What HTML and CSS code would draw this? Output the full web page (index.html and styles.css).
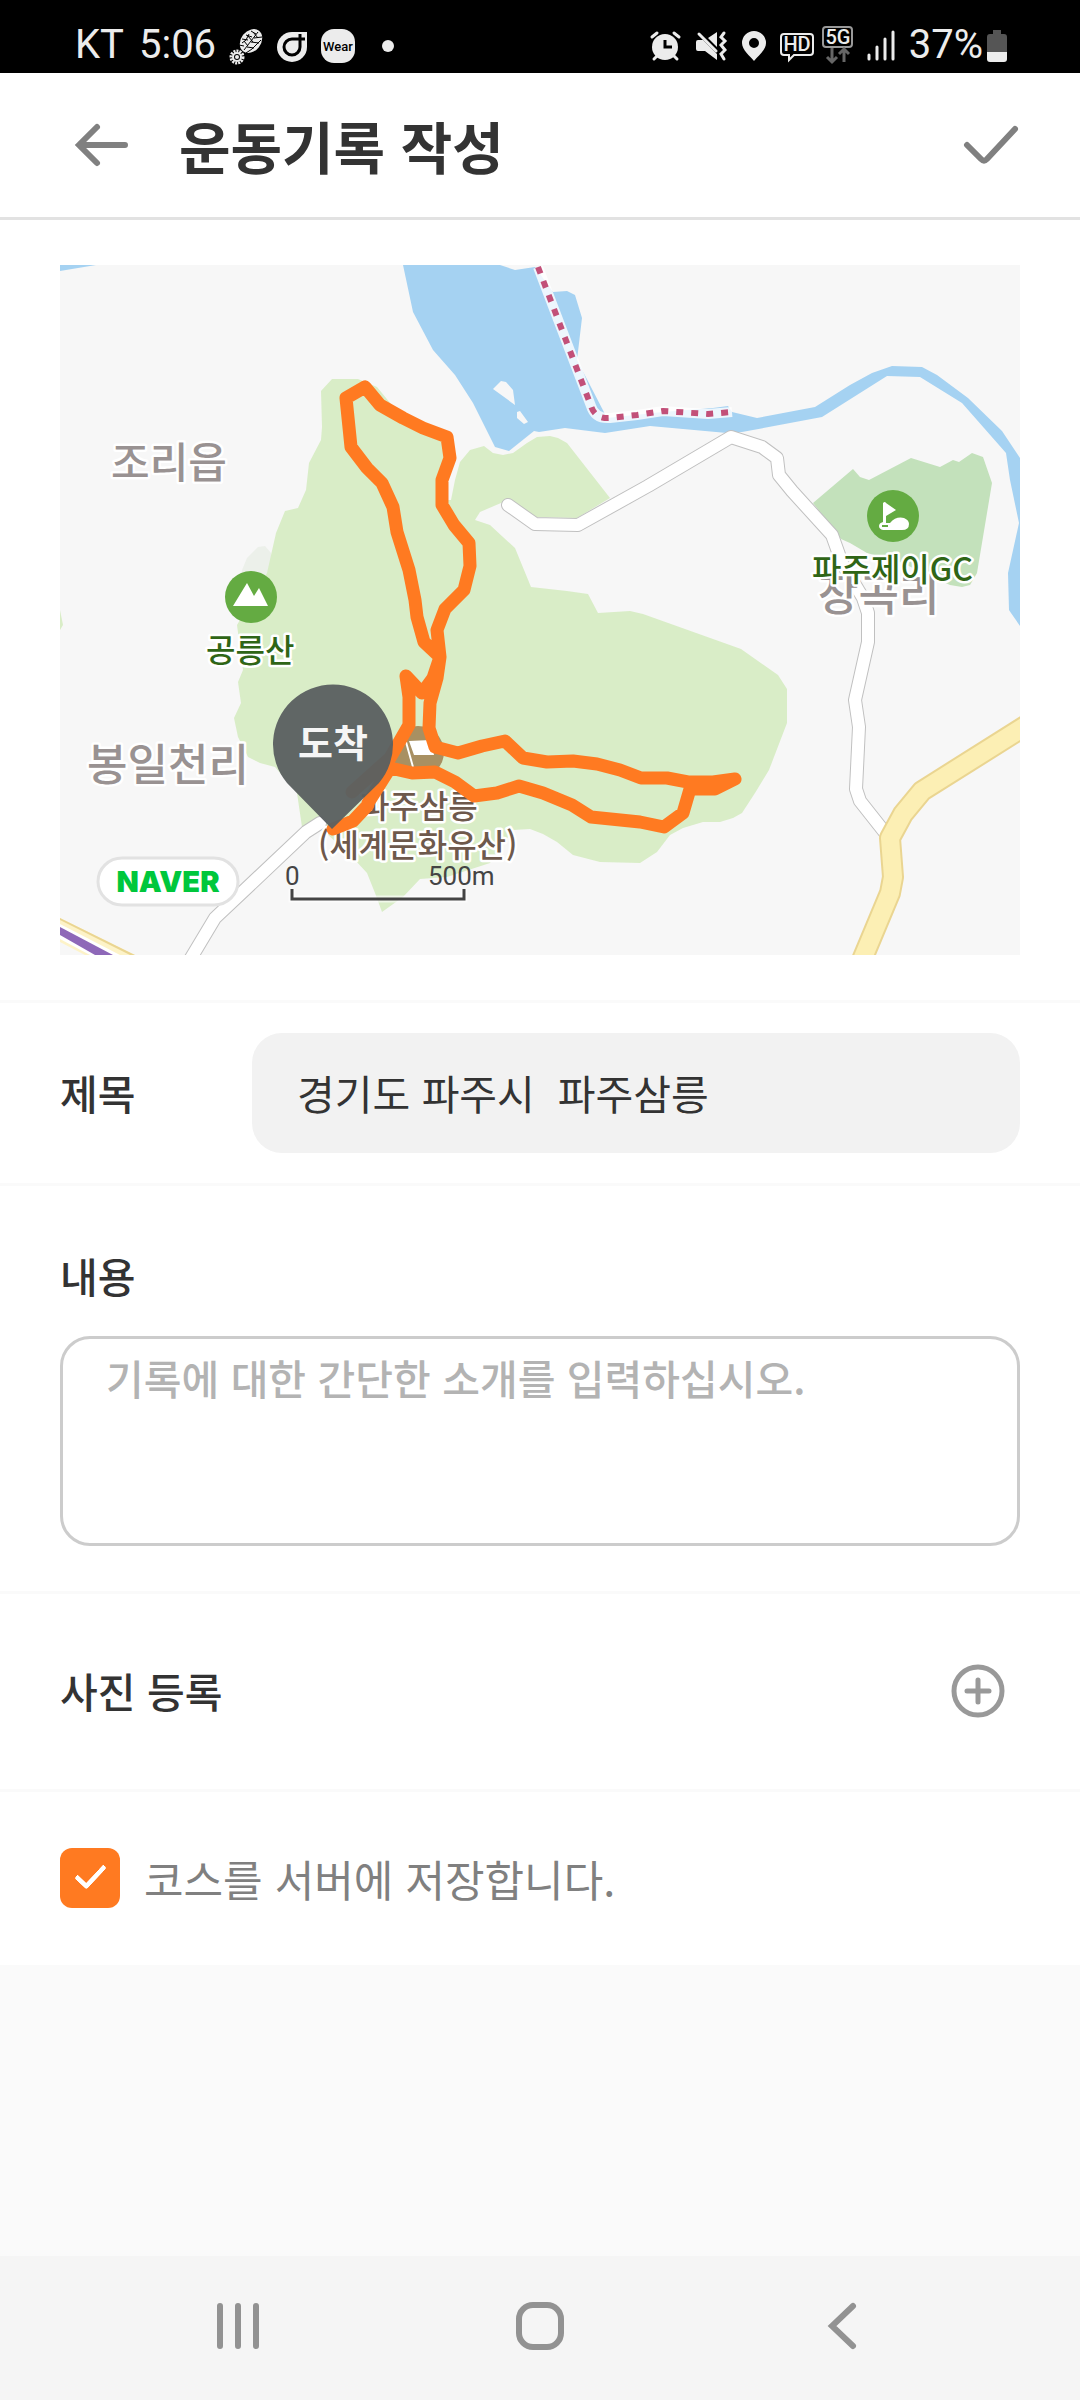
FILE: index.html
```html
<!DOCTYPE html>
<html lang="ko">
<head>
    <meta charset="UTF-8">
    <meta name="viewport" content="width=device-width, initial-scale=1.0">
    <title>운동기록 작성</title>
    <link rel="stylesheet" href="styles.css">
</head>
<body>
    <div class="status-bar">
        <div class="status-group">
            <span class="carrier">KT</span>
            <span class="clock">5:06</span>
            <svg class="status-icon" width="50" height="44" viewBox="0 0 50 44">
                <ellipse cx="29" cy="18" rx="10" ry="13" transform="rotate(38 29 18)"/>
                <g class="cut thin">
                    <path d="M22 27L36 9M20 20l4-3 3-6M24 30l6-4 9-9"/>
                    <path d="M17 22l5 1M20 16l6 1M24 12l6 2M29 8l5 3M25 24l7 1M29 19l8 1M32 15l8-1M22 18l4 5M26 13l5 6M31 9l5 6"/>
                </g>
                <circle class="gear" cx="15" cy="34" r="6"/>
                <circle class="gear-ring" cx="15" cy="34" r="4"/>
                <circle cx="15" cy="34" r="2"/>
            </svg>
            <svg class="status-icon" width="44" height="44" viewBox="0 0 44 44">
                <path d="M20 9h15v15a15 15 0 1 1-15-15z"/>
                <path class="cut" d="M28 11v13a8 8 0 1 1-8-8h13"/>
            </svg>
            <svg class="status-icon" width="44" height="44" viewBox="0 0 44 44">
                <rect x="5" y="6" width="34" height="34" rx="13"/>
                <text class="wear-text" x="22" y="28">Wear</text>
            </svg>
            <svg class="status-icon" width="44" height="44" viewBox="0 0 44 44">
                <circle cx="28" cy="23" r="6"/>
            </svg>
        </div>
        <div class="status-group">
            <svg class="status-icon" width="42" height="44" viewBox="0 0 42 44">
                <circle cx="19" cy="24" r="13"/>
                <path class="line" d="M6 14l5-4M28 10l5 4M11 33l-3 3M28 33l3 3"/>
                <path class="cut" d="M19 17v7h7"/>
            </svg>
            <svg class="status-icon" width="46" height="44" viewBox="0 0 46 44">
                <path d="M10 17h5l14 14v6L17 28h-7q-2 0-2-2v-7q0-2 2-2zM29 9v15l-9-9z"/>
                <path class="line" d="M11 11l17 17M36 10l-3 4 4 4-4 4 4 5-4 4 3 5"/>
                <path class="cut thin" d="M13 9l16 16"/>
            </svg>
            <svg class="status-icon" width="39" height="44" viewBox="0 0 39 44">
                <path fill-rule="evenodd" d="M20 8a12 12 0 0 1 12 12c0 7-8 13-12 18C16 33 8 27 8 20A12 12 0 0 1 20 8zm0 7a5 5 0 1 0 0 10 5 5 0 0 0 0-10z"/>
            </svg>
            <svg class="status-icon" width="45" height="44" viewBox="0 0 45 44">
                <path class="frame" d="M11 11h26q3 0 3 3v15q0 3-3 3H21l-5 5v-5h-5q-3 0-3-3V14q0-3 3-3z"/>
                <text class="badge-text" x="24" y="28">HD</text>
            </svg>
            <svg class="status-icon" width="40" height="44" viewBox="0 0 40 44">
                <rect class="frame dim" x="5" y="4" width="29" height="20" rx="3"/>
                <text class="badge-text" x="20" y="21">5G</text>
                <path class="frame arrows" d="M14 25v13M9 34l5 5 5-5M26 39V26M21 31l5-5 5 5"/>
            </svg>
            <svg class="status-icon" width="45" height="44" viewBox="0 0 45 44">
                <path class="line" d="M11 32v4M19 24v12M27 16v20M35 9v27"/>
            </svg>
            <span class="battery-text">37%</span>
            <svg class="status-icon" width="28" height="44" viewBox="0 0 28 44">
                <path class="battery-shell" d="M10 7h8v4h3q3 0 3 3v15H4V14q0-3 3-3h3z"/>
                <path d="M4 29h20v7q0 3-3 3H7q-3 0-3-3z"/>
            </svg>
        </div>
    </div>

    <header class="header">
        <button type="button" class="icon-button" aria-label="뒤로">
            <svg width="56" height="56" viewBox="0 0 56 56"><path d="M51 28H6M23 10L5 28l18 18"/></svg>
        </button>
        <h1 class="header-title">운동기록 작성</h1>
        <button type="submit" form="record-form" class="icon-button" aria-label="완료">
            <svg width="56" height="56" viewBox="0 0 56 56"><path d="M4 28l14 14q3 3 6 0L52 12"/></svg>
        </button>
    </header>

    <form class="record-form" id="record-form">
        <section class="section map-section">
            <svg class="map" viewBox="60 265 960 690" role="img" aria-label="코스 지도">
                <rect class="land" x="60" y="265" width="960" height="690"/>

                <!-- parks and forest -->
                <path class="patch" d="M242 570l5-12 11-11 7-1 6 7 4 20-20 60h-8l-10-17z"/>
                <path class="forest" d="M332 379L358 379 377 387 400 415 444 440 448 458 443 500 451 500 455 480 460 462 470 450 484 446 493 453 503 455 513 453 527 443 537 437 550 436 558 438 567 443 610 498 577 518 535 517 508 500 480 512 475 520 490 525 515 548 531 587 567 591 588 594 598 613 630 611 643 614 741 649 778 675 787 689 787 723 769 770 755 793 742 813 733 818 720 822 703 822 683 828 670 835 657 852 640 863 600 862 573 855 557 842 543 834 530 829 513 830 490 863 447 877 420 879 403 897 382 912 375 893 367 873 355 860 325 832 302 827 297 793 275 767 260 763 248 757 238 737 234 718 241 703 238 682 243 670 237 625 267 573 276 533 285 511 298 508 306 490 309 463 321 440 322 427 321 391z"/>
                <path class="forest" d="M60 610l3 15-3 5z"/>
                <path class="golf" d="M813 503L853 469 860 477 869 480 911 458 940 467 953 460 959 462 972 453 983 457 992 483 977 573 970 585 962 587 950 585 900 562 867 553 850 543 841 539z"/>

                <!-- water -->
                <path class="water" d="M60 265h36l-36 6z"/>
                <path class="water" d="M403 265L413 312 433 350 455 375 473 403 495 447 509 451 534 431 539 432 565 428 605 433 650 426 727 433 742 432 822 417 887 376 920 377 962 403 1006 453 1010 480 1019 523 1008 573 1009 610 1011 613 1020 626 1020 458 1002 431 968 398 937 375 922 367 892 366 872 373 850 385 815 407 757 418 732 412 728 406 713 408 663 412 607 418 577 360 582 318 575 295 567 291 553 292 535 267 515 270 500 265z"/>
                <path class="land" d="M493 389l8-8 5 1 7 8 2 15zM517 412l3-1 8 11-4 2-7-6z"/>

                <!-- roads -->
                <g class="road">
                    <path class="road-edge" d="M508 505l27 19 43 1 70-39 83-49 31 10 15 11 2 17 13 16 40 44 10 28 21 35 5 15v29l-13 58 4 27-3 62 4 12 30 38"/>
                    <path class="road-edge" d="M320 823l-14 9-91 86-24 40"/>
                    <path class="road-fill" d="M508 505l27 19 43 1 70-39 83-49 31 10 15 11 2 17 13 16 40 44 10 28 21 35 5 15v29l-13 58 4 27-3 62 4 12 30 38"/>
                    <path class="road-fill" d="M320 823l-14 9-91 86-24 40"/>
                    <path class="highway-edge" d="M1030 723l-108 68-19 23-13 24 3 39-3 16-28 67"/>
                    <path class="highway-fill" d="M1030 723l-108 68-19 23-13 24 3 39-3 16-28 67"/>
                </g>
                <path class="cream" d="M60 918l75 37H85l-25-13z"/>
                <path class="white" d="M60 924l60 31H90l-30-16z"/>
                <path class="gold" d="M60 918l75 37h-5l-70-35z"/>
                <path class="rail" d="M60 927l53 28H95l-35-20z"/>

                <!-- district border -->
                <path class="border-halo" d="M538 267l53 139q4 13 19 12l27-3 26-4 45 3 24-2"/>
                <path class="border-dash" d="M538 267l53 139q4 13 19 12l27-3 26-4 45 3 24-2"/>

                <!-- place names -->
                <g class="place area">
                    <text x="111" y="478">조리읍</text>
                    <text class="village" x="87" y="781">봉일천리</text>
                    <text class="village" x="818" y="611">장곡리</text>
                </g>
                <g class="place nature">
                    <text x="206" y="662">공릉산</text>
                    <text x="812" y="581">파주제이GC</text>
                </g>
                <g class="place heritage">
                    <text x="360" y="818">파주삼릉</text>
                    <text x="318" y="857">(세계문화유산)</text>
                </g>

                <circle class="poi-green" cx="251" cy="597" r="26"/>
                <path class="white" d="M233 606l14-23 7 13 5-8 9 18z"/>
                <circle class="poi-green" cx="893" cy="516" r="26"/>
                <path class="white" d="M883 503q2-2 3 0l10 7-10 6v7h4q6-7 14-5 5 2 5 6 0 6-7 6h-19q-4-1-4-4 0-3 4-4z"/>
                <path class="poi-mark" d="M882 526h6"/>
                <circle class="poi-brown" cx="418" cy="752" r="26"/>
                <path class="white" d="M409 741l22-1 3 15h-20zM405 742h2l7 25h-2z"/>

                <!-- scale -->
                <path class="scale-halo" d="M292 889v10h172v-10"/>
                <path class="scale-line" d="M292 889v10h172v-10"/>
                <text class="scale-text" x="285" y="885">0</text>
                <text class="scale-text" x="428" y="885">500m</text>

                <!-- walked course -->
                <path class="course" d="M333 829l20-8 15-16M352 792L390 758 409 725V697L406 676 422 693 433 678 440 657 424 642 417 617 415 600 409 570 397 532 393 507 382 483 367 468 351 447 346 398 365 387 380 405 403 418 423 428 447 437 450 458 442 480V505L454 525 469 543 470 566 464 590 445 609 437 630 440 657 437 678 430 703 429 728 435 747 458 753 482 746 505 741 523 758 547 762 573 761 597 764 620 770 641 778 667 778 688 782H713L735 779 715 789 690 789 683 813 664 827 640 822 591 817 572 805 543 793 519 786 497 793 474 796 455 782 435 772 412 773 390 768 368 803"/>

                <!-- finish marker -->
                <path class="marker" d="M332 829l-45-46a60 60 0 1 1 92 0z"/>
                <text class="marker-text" x="333" y="757">도착</text>

                <rect class="logo-box" x="98" y="858" width="140" height="47" rx="24"/>
                <text class="logo-text" x="168" y="892">NAVER</text>
            </svg>
        </section>

        <section class="section title-section">
            <label class="label" for="title">제목</label>
            <input class="title-input" type="text" id="title" name="title" value="경기도 파주시  파주삼릉">
        </section>

        <section class="section content-section">
            <label class="label" for="content">내용</label>
            <textarea class="content-input" id="content" name="content" placeholder="기록에 대한 간단한 소개를 입력하십시오."></textarea>
        </section>

        <section class="section photo-section">
            <h2 class="label">사진 등록</h2>
            <button type="button" class="add-button" aria-label="사진 추가">
                <svg width="54" height="54" viewBox="0 0 54 54"><circle cx="27" cy="27" r="24"/><path d="M27 16v22M16 27h22"/></svg>
            </button>
        </section>

        <section class="section save-section">
            <input class="save-check" type="checkbox" id="save-course" name="save_course" checked>
            <label class="save-label" for="save-course">코스를 서버에 저장합니다.</label>
        </section>
    </form>

    <nav class="nav-bar">
        <button type="button" class="nav-button" aria-label="최근 앱">
            <svg width="50" height="50" viewBox="0 0 50 50"><path d="M7 5v40M25 5v40M43 5v40"/></svg>
        </button>
        <button type="button" class="nav-button" aria-label="홈">
            <svg width="50" height="50" viewBox="0 0 50 50"><rect x="4" y="4" width="42" height="42" rx="14"/></svg>
        </button>
        <button type="button" class="nav-button" aria-label="이전">
            <svg width="50" height="50" viewBox="0 0 50 50"><path d="M36 5L15 25l21 20"/></svg>
        </button>
    </nav>
</body>
</html>
```
FILE: styles.css
```css
* {
    margin: 0;
    padding: 0;
    box-sizing: border-box;
}

body {
    font-family: 'Noto Sans CJK KR', sans-serif;
    background: #fafafa;
    color: #333;
    min-height: 100vh;
    display: flex;
    flex-direction: column;
}

button {
    background: none;
    border: none;
    cursor: pointer;
}

svg {
    display: block;
    fill: none;
}

/* Status bar */
.status-bar {
    display: flex;
    justify-content: space-between;
    background: #000;
    color: #ececec;
    height: 73px;
    padding: 16px 69px 0 75px;
    font-family: Roboto, sans-serif;
    font-size: 40px;
    line-height: 56px;
}

.status-group {
    display: flex;
    align-items: center;
}

.clock {
    margin: 0 6px 0 15px;
}

.battery-text {
    margin-left: 6px;
}

.status-icon {
    fill: #ececec;
}

.status-icon .cut {
    fill: none;
    stroke: #000;
    stroke-width: 3;
}

.status-icon .thin {
    stroke-width: 1;
}

.status-icon .line {
    fill: none;
    stroke: #ececec;
    stroke-width: 3;
    stroke-linecap: round;
}

.status-icon .frame {
    fill: none;
    stroke: #ececec;
    stroke-width: 2;
}

.status-icon .dim {
    stroke: #999;
}

.status-icon .arrows {
    stroke: #666;
    stroke-width: 3;
}

.status-icon .gear {
    fill: none;
    stroke: #ececec;
    stroke-width: 3;
    stroke-dasharray: 2 1;
}

.status-icon .gear-ring {
    fill: none;
    stroke: #ececec;
    stroke-width: 2;
}

.badge-text {
    font-size: 20px;
    font-weight: 500;
    text-anchor: middle;
}

.wear-text {
    fill: #000;
    font-size: 13px;
    font-weight: 500;
    text-anchor: middle;
}

.battery-shell {
    fill: #555;
}

/* Header */
.header {
    display: flex;
    align-items: center;
    height: 147px;
    padding: 0 61px 0 74px;
    background: #fff;
    border-bottom: 3px solid #e2e2e2;
}

.icon-button svg {
    stroke: #808080;
    stroke-width: 6;
    stroke-linecap: round;
}

.header-title {
    flex: 1;
    margin-left: 49px;
    font-size: 56px;
    line-height: 80px;
    font-weight: 700;
}

/* Form sections */
.section {
    background: #fff;
    padding: 0 60px;
    border-bottom: 3px solid #fafafa;
}

.label {
    padding-bottom: 2px;
    font-size: 41px;
    line-height: 58px;
    font-weight: 500;
}

.map-section {
    padding-top: 45px;
    padding-bottom: 45px;
}

.map {
    width: 100%;
    overflow: hidden;
}

.title-section {
    display: flex;
    align-items: center;
    padding-top: 30px;
    padding-bottom: 30px;
}

.title-section .label {
    width: 192px;
}

.title-input {
    flex: 1;
    min-width: 0;
    height: 120px;
    padding: 0 45px 2px;
    border: none;
    border-radius: 30px;
    background: #f2f2f2;
    color: #333;
    font-family: inherit;
    font-size: 41px;
}

.content-section {
    display: flex;
    flex-direction: column;
    gap: 30px;
    padding-top: 60px;
    padding-bottom: 45px;
}

.content-input {
    width: 100%;
    height: 210px;
    padding: 9px 43px;
    border: 3px solid #ccc;
    border-radius: 30px;
    color: #333;
    font-family: inherit;
    font-size: 41px;
    line-height: 58px;
    font-weight: 500;
    resize: none;
}

.content-input::placeholder {
    color: #b3b3b3;
}

.photo-section {
    display: flex;
    align-items: center;
    justify-content: space-between;
    height: 198px;
    padding-right: 75px;
    padding-bottom: 2px;
}

.add-button svg {
    stroke: #999;
    stroke-width: 5;
    stroke-linecap: round;
}

.save-section {
    display: flex;
    align-items: center;
    gap: 24px;
    padding-top: 54px;
    padding-bottom: 55px;
}

.save-check {
    appearance: none;
    width: 60px;
    height: 60px;
    border-radius: 12px;
    border: 3px solid #ccc;
}

.save-check:checked {
    border: none;
    background: #ff7a21;
}

.save-check:checked::after {
    content: '';
    display: block;
    box-sizing: border-box;
    width: 17px;
    height: 30px;
    margin: 10px auto 0;
    border: solid #fff;
    border-width: 0 5px 5px 0;
    border-radius: 3px;
    transform: rotate(43deg);
}

.save-label {
    color: #808080;
    font-size: 43px;
    line-height: 64px;
}

/* Map */
.land {
    fill: #f7f7f7;
}

.patch {
    fill: #ecf0ea;
}

.forest {
    fill: #d9edc7;
}

.golf {
    fill: #c3e1bb;
}

.water {
    fill: #a5d2f2;
}

.white {
    fill: #fff;
}

.cream {
    fill: #fdf3c8;
}

.gold {
    fill: #ead591;
}

.rail {
    fill: #8e68b8;
}

.road {
    stroke-linejoin: round;
    stroke-linecap: round;
}

.road-edge {
    stroke: #c0c0c0;
    stroke-width: 14;
}

.road-fill {
    stroke: #fff;
    stroke-width: 12;
}

.highway-edge {
    stroke: #ead591;
    stroke-width: 22;
}

.highway-fill {
    stroke: #fcefb4;
    stroke-width: 18;
}

.border-halo {
    stroke: #fff;
    stroke-opacity: 0.8;
    stroke-width: 10;
}

.border-dash {
    stroke: #c25079;
    stroke-width: 6;
    stroke-dasharray: 7 8;
}

.place {
    stroke: #fff;
    stroke-width: 5;
    stroke-linejoin: round;
    paint-order: stroke;
    font-weight: 500;
    font-size: 32px;
}

.area {
    fill: #999292;
    font-size: 42px;
}

.village {
    font-size: 44px;
}

.nature {
    fill: #2f6516;
}

.heritage {
    fill: #6e594c;
}

.poi-green {
    fill: #64ab42;
}

.poi-mark {
    stroke: #64ab42;
    stroke-width: 2;
}

.poi-brown {
    fill: #a89062;
}

.scale-halo {
    stroke: #fff;
    stroke-opacity: 0.6;
    stroke-width: 7;
}

.scale-line {
    stroke: #444;
    stroke-width: 3;
}

.scale-text {
    fill: #444;
    font-family: Roboto, sans-serif;
    font-size: 26px;
}

.course {
    stroke: #ff7a21;
    stroke-width: 13;
    stroke-linejoin: round;
    stroke-linecap: round;
}

.marker {
    fill: #5b6061;
    fill-opacity: 0.96;
}

.marker-text {
    fill: #f5f5f5;
    font-size: 38px;
    font-weight: 700;
    text-anchor: middle;
}

.logo-box {
    fill: #fff;
    stroke: #e2e2e2;
    stroke-width: 3;
}

.logo-text {
    fill: #00c73c;
    font-family: Inter, sans-serif;
    font-size: 29px;
    font-weight: 900;
    text-anchor: middle;
}

/* Bottom navigation */
.nav-bar {
    display: grid;
    grid-template-columns: repeat(3, 302px);
    justify-content: center;
    justify-items: center;
    align-items: center;
    height: 144px;
    padding-bottom: 4px;
    margin-top: auto;
    background: #f5f5f5;
}

.nav-button svg {
    stroke: #929292;
    stroke-width: 6;
    stroke-linecap: round;
}
```
